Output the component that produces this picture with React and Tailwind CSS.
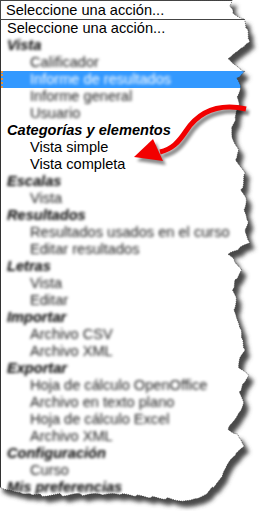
import React from "react";

const options = [
  { label: "Seleccione una acción...", type: "plain" },
  { label: "Vista", type: "group", hidden: true },
  { label: "Calificador", type: "item", hidden: true },
  { label: "Informe de resultados", type: "item", hidden: true, selected: true },
  { label: "Informe general", type: "item", hidden: true },
  { label: "Usuario", type: "item", hidden: true },
  { label: "Categorías y elementos", type: "group" },
  { label: "Vista simple", type: "item" },
  { label: "Vista completa", type: "item" },
  { label: "Escalas", type: "group", hidden: true },
  { label: "Vista", type: "item", hidden: true },
  { label: "Resultados", type: "group", hidden: true },
  { label: "Resultados usados en el curso", type: "item", hidden: true },
  { label: "Editar resultados", type: "item", hidden: true },
  { label: "Letras", type: "group", hidden: true },
  { label: "Vista", type: "item", hidden: true },
  { label: "Editar", type: "item", hidden: true },
  { label: "Importar", type: "group", hidden: true },
  { label: "Archivo CSV", type: "item", hidden: true },
  { label: "Archivo XML", type: "item", hidden: true },
  { label: "Exportar", type: "group", hidden: true },
  { label: "Hoja de cálculo OpenOffice", type: "item", hidden: true },
  { label: "Archivo en texto plano", type: "item", hidden: true },
  { label: "Hoja de cálculo Excel", type: "item", hidden: true },
  { label: "Archivo XML", type: "item", hidden: true },
  { label: "Configuración", type: "group", hidden: true },
  { label: "Curso", type: "item", hidden: true },
  { label: "Mis preferencias", type: "group", hidden: true },
];

// rough outline of the torn paper (right + bottom edges)
const edge = [
  [232, 0], [229, 6], [233, 12], [243, 19], [247, 30], [250, 41], [244, 47],
  [238, 52], [228, 60], [235, 66], [245, 72], [237, 78], [240, 88], [236, 97],
  [238, 104], [235, 112], [235, 120], [232, 130], [234, 140], [240, 150],
  [237, 160], [245, 175], [241, 190], [246, 200], [243, 210], [247, 222],
  [244, 232], [250, 242], [238, 250], [228, 255], [236, 262], [243, 270],
  [236, 280], [233, 290], [236, 300], [233, 310], [236, 320], [240, 330],
  [242, 340], [245, 350], [240, 360], [240, 370], [250, 376], [244, 384],
  [240, 392], [243, 405], [238, 413], [228, 428], [236, 434], [240, 440],
  [244, 446], [236, 455], [230, 462], [226, 470], [222, 478], [212, 488],
  [205, 495], [195, 498], [183, 500], [165, 498], [150, 497], [135, 496],
  [120, 495], [100, 495], [80, 495], [60, 495], [40, 495], [30, 494],
  [20, 492], [10, 489], [0, 487],
];

const buildPaper = () => {
  const pts = [[-2, -2]];
  for (let i = 0; i < edge.length - 1; i++) {
    const [x1, y1] = edge[i];
    const [x2, y2] = edge[i + 1];
    const len = Math.hypot(x2 - x1, y2 - y1);
    const steps = Math.max(1, Math.round(len / 2.5));
    for (let s = 0; s < steps; s++) {
      const t = s / steps;
      const j = Math.sin((i * 31 + s) * 12.9898) * 1.4;
      const vertical = Math.abs(y2 - y1) > Math.abs(x2 - x1);
      pts.push([
        x1 + (x2 - x1) * t + (vertical ? j : 0),
        y1 + (y2 - y1) * t + (vertical ? 0 : j),
      ]);
    }
  }
  pts.push(edge[edge.length - 1]);
  pts.push([-2, 487]);
  return pts.map((p) => p[0].toFixed(1) + "," + p[1].toFixed(1)).join(" ");
};

const paper = buildPaper();

const Row = ({ option }) => {
  const base = "h-[17px] leading-[17px] whitespace-nowrap";
  let pad = option.type === "item" ? "pl-[29px]" : "pl-[6px]";
  if (option.selected) pad = "pl-[27px] bg-[#3399ff] border-l-2 border-dotted border-l-[#e09040]";
  const weight = option.type === "group" ? "font-bold italic" : "";
  let color = "text-black";
  if (option.hidden) color = option.type === "group" ? "text-black" : "text-[#222]";
  if (option.selected) color = "text-white";

  return (
    <div className={`${base} ${pad}`}>
      <span className={`${weight} ${color} ${option.hidden ? "blur-[1.4px]" : ""} inline-block`}>
        {option.label}
      </span>
    </div>
  );
};

const Overlay = () => (
  <svg
    className="absolute inset-0 pointer-events-none"
    width="263"
    height="511"
    viewBox="0 0 263 511"
  >
    <defs>
      <filter id="soft" x="-20%" y="-20%" width="140%" height="140%">
        <feGaussianBlur stdDeviation="2.2" />
      </filter>
      <filter id="arrowShadow" x="-30%" y="-30%" width="160%" height="160%">
        <feGaussianBlur stdDeviation="1.5" />
      </filter>
      <mask id="outside">
        <rect width="263" height="511" fill="white" />
        <polygon points={paper} fill="black" />
      </mask>
    </defs>
    <g mask="url(#outside)">
      <rect width="263" height="511" fill="white" />
      <polygon points={paper} transform="translate(5,6)" fill="#4a4a4a" filter="url(#soft)" />
    </g>
    <polygon points={paper} fill="none" stroke="#333" strokeWidth="0.7" strokeDasharray="1 1" />

    {/* red arrow */}
    <g transform="translate(3,4)" filter="url(#arrowShadow)" opacity="0.45">
      <path d="M246 109 C214 102 196 116 186 131 C178 143 172 149 160 152" fill="none" stroke="#000" strokeWidth="5" />
      <polygon points="134,157 153,139 163,161" fill="#000" />
    </g>
    <path d="M246 109 C214 102 196 116 186 131 C178 143 172 149 160 152" fill="none" stroke="#f20000" strokeWidth="5" />
    <polygon points="134,157 153,139 163,161" fill="#f20000" />
  </svg>
);

export default function App() {
  return (
    <div
      className="relative w-[263px] h-[511px] overflow-hidden bg-white text-[14.6px]"
      style={{ fontFamily: '"Liberation Sans", Arial, sans-serif' }}
    >
      <div className="h-[20px] leading-[18px] border-t border-b border-l border-[#444] pl-[5px] text-black">
        Seleccione una acción...
      </div>
      <div className="border-l border-[#333] h-[470px]">
        {options.map((o, i) => (
          <Row key={i} option={o} />
        ))}
      </div>
      <Overlay />
    </div>
  );
}
